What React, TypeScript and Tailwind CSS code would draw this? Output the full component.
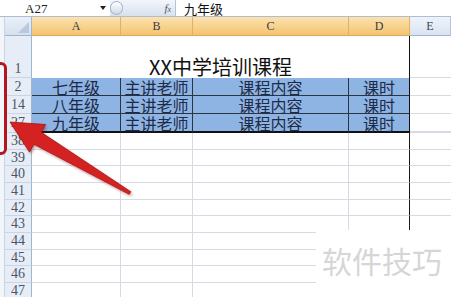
import React from "react";

const serif = { fontFamily: '"Liberation Serif", "DejaVu Serif", serif' };
const cjk = { fontFamily: '"Noto Sans CJK SC", "Noto Sans", sans-serif' };

function RowHead({ label, h, end }: { label: string; h: string; end?: boolean }) {
  return (
    <div className={`flex w-[32px] ${h} shrink-0`}>
      <div className="w-[5px] bg-[#f2f5fa] border-r border-[#c9d5e4]" />
      <div
        className={`flex-1 flex justify-center ${end ? "items-end pb-[1px]" : "items-center"} bg-[#e6edf6] border-r border-b border-r-[#9eb6ce] border-b-[#c9d5e4] text-[14px] leading-none text-[#4a5666]`}
        style={serif}
      >
        {label}
      </div>
    </div>
  );
}

function EmptyRow({ label, h }: { label: string; h: string }) {
  return (
    <div className={`flex ${h}`}>
      <RowHead label={label} h={h} />
      <div className="w-[89px] border-r border-b border-[#d6dbe3]" />
      <div className="w-[72px] border-r border-b border-[#d6dbe3]" />
      <div className="w-[156px] border-r border-b border-[#d6dbe3]" />
      <div className="w-[61px] border-b border-r border-b-[#d6dbe3] border-r-[#1a1a1a]" />
      <div className="w-[41px] border-b border-[#d6dbe3]" />
    </div>
  );
}

function DataRow({ label, grade, h, last }: { label: string; grade: string; h: string; last?: boolean }) {
  const b = last ? "border-b-2 border-b-[#111]" : "border-b border-b-[#2c3444]";
  const cell = `flex items-center justify-center bg-[#8eb4e3] border-r border-r-[#2c3444] ${b} text-[16px] leading-none text-[#1d2a48]`;
  return (
    <div className={`flex ${h}`}>
      <RowHead label={label} h={h} />
      <div className={`w-[89px] ${cell}`} style={cjk}>{grade}</div>
      <div className={`w-[72px] ${cell}`} style={cjk}>主讲老师</div>
      <div className={`w-[156px] ${cell}`} style={cjk}>课程内容</div>
      <div className={`w-[61px] ${cell} border-r-[#111]`} style={cjk}>课时</div>
      <div className={`w-[41px] ${last ? "border-b-2 border-b-[#d6dbe3]" : "border-b border-[#d6dbe3]"}`} />
    </div>
  );
}

function ColHead({ w, label, sel }: { w: string; label: string; sel?: boolean }) {
  return (
    <div
      className={`${w} flex items-center justify-center border-r border-b text-[12px] leading-none ${
        sel
          ? "bg-gradient-to-b from-[#fbe2b0] to-[#f4c46f] border-r-[#e1b067] border-b-[#d8a95c] text-[#3d3a3a]"
          : "bg-gradient-to-b from-[#eef3fa] to-[#d9e4f1] border-r-[#b6c6da] border-b-[#9eb6ce] text-[#3a4658]"
      }`}
      style={serif}
    >
      {label}
    </div>
  );
}

export default function App() {
  const rows2 = [
    ["38", "h-[17px]"],
    ["39", "h-[16px]"],
    ["40", "h-[17px]"],
    ["41", "h-[17px]"],
    ["42", "h-[16px]"],
    ["43", "h-[17px]"],
    ["44", "h-[17px]"],
    ["45", "h-[16px]"],
    ["46", "h-[17px]"],
    ["47", "h-[17px]"],
  ];
  const pts = "10,122 45.7,124.5 41.2,132.3 130.8,191.7 129.2,194.3 34,144.3 29.5,152.1";
  return (
    <div className="relative w-[451px] h-[297px] overflow-hidden bg-white">
      {/* formula bar */}
      <div className="flex h-[17px] border-b border-[#aebdd1] bg-white">
        <div className="w-[100px] flex items-center pl-[25px] text-[13px] leading-none text-[#222]" style={serif}>
          A27
        </div>
        <div className="w-[10px] flex items-center justify-start">
          <div className="w-0 h-0 border-l-[3px] border-r-[3px] border-t-[4px] border-l-transparent border-r-transparent border-t-[#222]" />
        </div>
        <div className="relative w-[66px] flex items-center justify-end pr-[4px] bg-gradient-to-b from-[#f3f6fb] to-[#d7e1ee] border-r border-[#b5c3d6]">
          <div className="absolute left-0 top-[1px] w-[13px] h-[14px] rounded-full border border-[#9fb0c6] bg-gradient-to-b from-white to-[#cfd9e6]" />
          <span className="text-[11px] italic leading-none text-[#555]" style={serif}>
            f<span className="text-[8px]">x</span>
          </span>
        </div>
        <div className="flex-1 flex items-center pl-[8px] text-[13px] leading-none text-[#111]" style={cjk}>
          九年级
        </div>
      </div>

      {/* column headers */}
      <div className="flex h-[19px]">
        <div className="flex w-[32px]">
          <div className="w-[5px] bg-[#f2f5fa] border-r border-[#c9d5e4]" />
          <div className="relative flex-1 bg-gradient-to-b from-[#eaf0f8] to-[#d5e0ee] border-r border-b border-[#9eb6ce]">
            <svg className="absolute right-[2px] bottom-[2px]" width="11" height="11">
              <polygon points="11,0 11,11 0,11" fill="#b9c8da" />
            </svg>
          </div>
        </div>
        <ColHead w="w-[89px]" label="A" sel />
        <ColHead w="w-[72px]" label="B" sel />
        <ColHead w="w-[156px]" label="C" sel />
        <ColHead w="w-[61px]" label="D" sel />
        <ColHead w="w-[41px]" label="E" />
      </div>

      {/* row 1 */}
      <div className="flex h-[42px]">
        <RowHead label="1" h="h-[42px]" end />
        <div
          className="w-[378px] flex items-end justify-center pb-[1px] border-r border-r-[#111] text-[20px] leading-none text-[#111]"
          style={cjk}
        >
          XX中学培训课程
        </div>
        <div className="w-[41px] border-b border-[#d6dbe3]" />
      </div>

      <DataRow label="2" grade="七年级" h="h-[18px]" />
      <DataRow label="14" grade="八年级" h="h-[18px]" />
      <DataRow label="27" grade="九年级" h="h-[19px]" last />

      {rows2.map(([l, h]) => (
        <EmptyRow key={l} label={l} h={h} />
      ))}

      {/* watermark */}
      <div
        className="absolute left-[316px] top-[230px] w-[135px] h-[67px] bg-white pl-[6px] pt-[15px] text-[30px] leading-none text-[#d6d6d6]"
        style={cjk}
      >
        软件技巧
      </div>

      {/* red bracket */}
      <div className="absolute left-[-20px] top-[62px] w-[27px] h-[93px] rounded-[6px] border-[3px] border-[#b3161d]" />

      {/* red arrow */}
      <svg className="absolute left-0 top-0 pointer-events-none" width="451" height="297">
        <defs>
          <filter id="sh" x="-20%" y="-20%" width="140%" height="140%">
            <feGaussianBlur stdDeviation="1.5" />
          </filter>
        </defs>
        <polygon points={pts} fill="#7a0c0c" opacity="0.45" filter="url(#sh)" transform="translate(1.5,2)" />
        <polygon points={pts} fill="#d42222" stroke="#a81414" strokeWidth="0.8" strokeLinejoin="round" />
      </svg>
    </div>
  );
}
